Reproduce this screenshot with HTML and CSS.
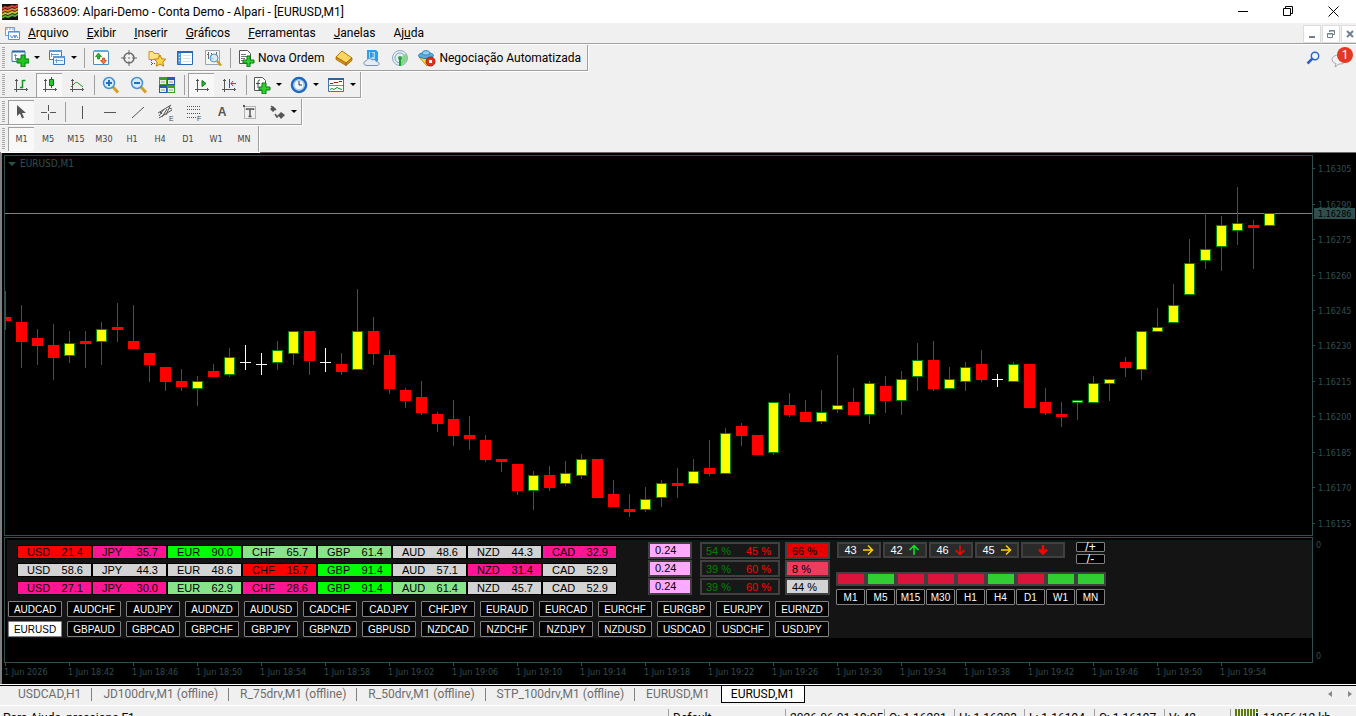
FILE: index.html
```html
<!DOCTYPE html>
<html lang="pt-BR">
<head>
    <meta charset="UTF-8">
    <meta name="viewport" content="width=device-width, initial-scale=1.0">
    <title>16583609: Alpari-Demo - Conta Demo - Alpari - [EURUSD,M1]</title>
    <link rel="stylesheet" href="styles.css">
</head>
<body>
    <header class="titlebar">
        <svg class="logo" width="16" height="16" viewBox="0 0 16 16">
            <rect width="16" height="16" fill="#111"/>
            <g fill="none" stroke-width="2">
                <path d="M0 5l3-2 3 1 4-2 3 1 3-2" stroke="#e8402c"/>
                <path d="M0 8l3-2 3 1 4-2 3 1 3-2" stroke="#f08030"/>
                <path d="M0 11l3-2 3 1 4-2 3 1 3-2" stroke="#c8c43a"/>
                <path d="M0 14l3-2 3 1 4-2 3 1 3-2" stroke="#58b030"/>
            </g>
        </svg>
        <h1>16583609: Alpari-Demo - Conta Demo - Alpari - [EURUSD,M1]</h1>
        <div class="window-buttons">
            <button aria-label="Minimizar"><svg width="11" height="11" viewBox="0 0 11 11"><path d="M0 5.500h10" stroke="#000"/></svg></button>
            <button aria-label="Restaurar"><svg width="11" height="11" viewBox="0 0 11 11"><path d="M.5 2.500h7v7h-7zM2.500 2.500v-2h7v7h-2" fill="none" stroke="#000"/></svg></button>
            <button aria-label="Fechar"><svg width="11" height="11" viewBox="0 0 11 11"><path d="M.5.5l10 10M10.500.5l-10 10" stroke="#000"/></svg></button>
        </div>
    </header>

    <nav class="menubar">
        <svg class="menu-icon" width="15" height="14" viewBox="0 0 15 14">
            <path d="M.5.5h9v8h-9z" fill="#fff" stroke="#6a9fe0"/><path d="M1 2h8" stroke="#6a9fe0" stroke-dasharray="2 1"/>
            <path d="M3.500 4.500h11v8h-11z" fill="#fff" stroke="#5b8fd8"/><path d="M4 5.500h10" stroke="#9cc2ee"/>
            <path d="M5 8l2 3 2-3 1 3 1-3 2 3" fill="none" stroke="#5b8fd8"/>
        </svg>
        <a href="#"><u>A</u>rquivo</a>
        <a href="#"><u>E</u>xibir</a>
        <a href="#"><u>I</u>nserir</a>
        <a href="#"><u>G</u>ráficos</a>
        <a href="#"><u>F</u>erramentas</a>
        <a href="#"><u>J</u>anelas</a>
        <a href="#">Aj<u>u</u>da</a>
        <div class="mdi-buttons">
            <button aria-label="Minimizar gráfico"><svg width="10" height="10" viewBox="0 0 10 10"><path d="M2 8h6" stroke="#708090" stroke-width="2"/></svg></button>
            <button aria-label="Restaurar gráfico"><svg width="10" height="10" viewBox="0 0 10 10"><path d="M1.500 4.500h5v4h-5zM1 5h6M3.500 3V1.500h5v4H7M3 2h6" fill="none" stroke="#708090"/></svg></button>
            <button aria-label="Fechar gráfico"><svg width="10" height="10" viewBox="0 0 10 10"><path d="M2 2l6 6M8 2l-6 6" stroke="#708090" stroke-width="2"/></svg></button>
        </div>
    </nav>

    <main>
        <section class="toolbars">
            <div class="toolbar-row">
                <div class="toolbar">
                    <button class="drop" aria-label="Novo gráfico">
                        <svg width="18" height="18" viewBox="0 0 18 18"><path d="M1 2.500h13v10H1z" fill="#fff" stroke="#3878b8"/><path d="M1 2.500h13" stroke="#2864a8" stroke-width="2"/><path d="M4.500 5v6M3 6.500h3M4 9.500h4" stroke="#7090b0"/><path d="M10 6h4v4h4v4h-4v4h-4v-4H6v-4h4z" fill="#22c522" stroke="#087a10"/></svg>
                        <i class="caret"></i>
                    </button>
                    <button class="drop" aria-label="Perfis">
                        <svg width="18" height="18" viewBox="0 0 18 18"><path d="M1.500 1.500h12v9h-12z" fill="#fff" stroke="#3878b8"/><path d="M1 2h13" stroke="#5a9ad8" stroke-width="2"/><path d="M4 5.500h7M3.500 4v4" stroke="#6a9cc8"/><path d="M5.500 7.500h11v8h-11z" fill="#e8f3fc" stroke="#3878b8"/><path d="M5 8h12" stroke="#5a9ad8" stroke-width="2"/><path d="M7 11.500h8M8.500 10v4" stroke="#6a9cc8"/></svg>
                        <i class="caret"></i>
                    </button>
                    <span class="sep"></span>
                    <button aria-label="Observação do mercado"><svg width="18" height="18" viewBox="0 0 18 18"><path d="M1.500 2.500h15v13h-15z" fill="#fffef0" stroke="#4a8cc8"/><path d="M2 2h14" stroke="#62a8e4" stroke-width="2"/><path d="M6.500 4l3 3.500h-2V10h-2V7.500h-2z" fill="#28b828" stroke="#0a8010" stroke-width=".7"/><path d="M11.500 15l3-3.500h-2V9h-2v2.500h-2z" fill="#f08040" stroke="#c03010" stroke-width=".7"/></svg></button>
                    <button aria-label="Janela de dados"><svg width="18" height="18" viewBox="0 0 18 18"><circle cx="9" cy="9" r="5" fill="none" stroke="#6a6a6a" stroke-width="1.500"/><path d="M9 1v5M9 12v5M1 9h5M12 9h5" stroke="#6a6a6a"/><path d="M8 9h2M9 8v2" stroke="#999"/></svg></button>
                    <button aria-label="Navegador"><svg width="18" height="18" viewBox="0 0 18 18"><path d="M1 2.500h4l1 2h5v6H1z" fill="#ffe480" stroke="#c89820"/><path d="M3.500 11v5M4 14.500h4" stroke="#555" stroke-dasharray="1 1"/><path d="M12 6l1.800 3.800 4 .4-3 2.800.9 4.200-3.700-2.200-3.700 2.200.9-4.200-3-2.800 4-.4z" fill="#ffd54a" stroke="#c08010"/></svg></button>
                    <button aria-label="Terminal"><svg width="18" height="18" viewBox="0 0 18 18"><path d="M1.500 2.500h15v13h-15z" fill="#fff" stroke="#2a68b0"/><path d="M1 3h16" stroke="#2a68b0" stroke-width="2"/><path d="M2 4h3v11H2z" fill="#5a9ad8"/><path d="M3.500 5v9" stroke="#fff" stroke-dasharray="1 2"/><path d="M7 6.500h8M7 9.500h8M7 12.500h8" stroke="#d4e2f0"/></svg></button>
                    <button aria-label="Testador de estratégia"><svg width="18" height="18" viewBox="0 0 18 18"><path d="M1.500 1.500h14v14h-14z" fill="#f7f7ee" stroke="#98a4b0"/><path d="M4.500 3v7M7.500 4v7M12.500 3v4M3 5.500h2M7 9.500h3" stroke="#5c6c7c"/><circle cx="10" cy="9" r="4" fill="#cfe7f8" fill-opacity=".8" stroke="#4a94d0"/><path d="M13 12l4 4.500" stroke="#d89820" stroke-width="2.500"/></svg></button>
                    <span class="sep"></span>
                    <button class="labeled">
                        <svg width="18" height="18" viewBox="0 0 18 18"><path d="M2.500 1.500h8l3 3v10h-11z" fill="#fff" stroke="#555"/><path d="M4 5.500h5M4 7.500h7M4 9.500h4M4 11.500h3" stroke="#777"/><path d="M10 7h3v4h4v3h-4v4h-3v-4H6v-3h4z" fill="#30d030" stroke="#087a10"/></svg>
                        Nova Ordem
                    </button>
                    <button aria-label="MetaEditor"><svg width="18" height="18" viewBox="0 0 18 18"><path d="M7 2l10 7-6 5-10-6z" fill="#ffd660" stroke="#b87808"/><path d="M1 8v2.500l10 6V14zM11 14l6-5v2.500l-6 5z" fill="#d89018" stroke="#9a6008" stroke-width=".7"/></svg></button>
                    <button aria-label="Mercado"><svg width="18" height="18" viewBox="0 0 18 18"><path d="M4 1h9l2 2v9H4z" fill="#28a0f0"/><path d="M6 3h6v7H6z" fill="#a8dcff"/><path d="M7 5h4M7 7h4M8 3v6" stroke="#1878d0"/><path d="M4 16.500c-4 0-4-4-1-4.500 1-3 5-3 6-1 2-1 4 0 4 1.500 4 0 4 4 1 4z" fill="#e6ecf4" stroke="#7890b0"/></svg></button>
                    <button aria-label="Sinais"><svg width="18" height="18" viewBox="0 0 18 18"><circle cx="9" cy="9" r="7.500" fill="#e4eef4" stroke="#90aac0"/><circle cx="9" cy="9" r="5" fill="none" stroke="#82a4c0"/><path d="M9 9v7.500a7.500 7.500 0 006-12z" fill="#7ed080" opacity=".8"/><circle cx="9" cy="9" r="2" fill="#3a9a50"/><path d="M9 9v8" stroke="#20a030" stroke-width="2"/></svg></button>
                    <button class="labeled">
                        <svg width="18" height="18" viewBox="0 0 18 18"><path d="M1 8h14l-6 9z" fill="#ffd840" stroke="#c09018"/><ellipse cx="8" cy="6.500" rx="7.500" ry="3" fill="#58acdc" stroke="#2878b0"/><path d="M4 5a4 3.500 0 018 0c-2 1.500-6 1.500-8 0z" fill="#90d0f0" stroke="#3888b8"/><circle cx="12.500" cy="12.500" r="4.500" fill="#e03020" stroke="#b01810"/><path d="M11 11h3v3h-3z" fill="#fff"/></svg>
                        Negociação Automatizada
                    </button>
                </div>
                <div class="notices">
                    <button aria-label="Procurar"><svg width="14" height="14" viewBox="0 0 14 14"><circle cx="9" cy="5" r="3.700" fill="#eef6ff" stroke="#2c68d0" stroke-width="1.500"/><path d="M6.500 7.500L1.500 12.500" stroke="#2c60c8" stroke-width="2.500"/></svg></button>
                    <button class="chat" aria-label="Mensagens">
                        <svg width="16" height="14" viewBox="0 0 16 14"><path d="M8 1c4 0 7 1.500 7 4.500S12 10 9 10H8l-4 3 1-3.500C3 9 1 8 1 5.500S4 1 8 1z" fill="#f2f2f6" stroke="#aaa"/></svg>
                        <span class="badge">1</span>
                    </button>
                </div>
            </div>

            <div class="toolbar-row">
                <div class="toolbar">
                    <button aria-label="Gráfico de barras"><svg width="18" height="18" viewBox="0 0 18 18"><path d="M4.500 3v13M2 13.500h14M3 4.500h3M14.500 12v3" stroke="#555"/><path d="M10.500 4v8M10.500 4.500h3M8 11.500h3" stroke="#109820" stroke-width="1.500"/></svg></button>
                    <button class="pressed" aria-label="Velas"><svg width="18" height="18" viewBox="0 0 18 18"><path d="M4.500 3v13M2 13.500h14M3 4.500h3M14.500 12v3" stroke="#555"/><path d="M10.500 1v11" stroke="#087a10"/><path d="M8.500 3.500h4v6h-4z" fill="#28c830" stroke="#087a10"/></svg></button>
                    <button aria-label="Gráfico de linha"><svg width="18" height="18" viewBox="0 0 18 18"><path d="M4.500 3v13M2 13.500h14M3 4.500h3M14.500 12v3" stroke="#555"/><path d="M3 11l4-4c1-1 2-1 3 0l5 4" fill="none" stroke="#109820"/></svg></button>
                    <span class="sep"></span>
                    <button aria-label="Ampliar"><svg width="18" height="18" viewBox="0 0 18 18"><path d="M11 11l5 5.500" stroke="#d8a020" stroke-width="3"/><circle cx="7" cy="7" r="5.500" fill="#d4ecfc" stroke="#4890d0" stroke-width="1.500"/><path d="M4 7h6M7 4v6" stroke="#2070c0" stroke-width="2"/></svg></button>
                    <button aria-label="Reduzir"><svg width="18" height="18" viewBox="0 0 18 18"><path d="M11 11l5 5.500" stroke="#d8a020" stroke-width="3"/><circle cx="7" cy="7" r="5.500" fill="#d4ecfc" stroke="#4890d0" stroke-width="1.500"/><path d="M4 7h6" stroke="#2070c0" stroke-width="2"/></svg></button>
                    <button aria-label="Lado a lado"><svg width="18" height="18" viewBox="0 0 18 18"><path d="M1 1h8v8H1zM9 9h8v8H9z" fill="#3ca020"/><path d="M9 1h8v8H9zM1 9h8v8H1z" fill="#2858b8"/><path d="M2 4h6v4H2zM10 4h6v4h-6zM2 12h6v4H2zM10 12h6v4h-6z" fill="#e8f0e0"/><path d="M3 6h4M11 6h4M3 14h4M11 14h4" stroke="#8aa"/></svg></button>
                    <span class="sep"></span>
                    <button class="pressed" aria-label="Rolagem automática"><svg width="18" height="18" viewBox="0 0 18 18"><path d="M4.500 3v13M2 13.500h14M3 4.500h3M14.500 12v3" stroke="#555"/><path d="M9 4.500v6L13 7.500z" fill="#28b830" stroke="#087a10"/></svg></button>
                    <button aria-label="Deslocamento do gráfico"><svg width="18" height="18" viewBox="0 0 18 18"><path d="M4.500 3v13M2 13.500h14M3 4.500h3M14.500 12v3" stroke="#555"/><path d="M9.500 3v9" stroke="#2060a0"/><path d="M11 7.500h5M13 5l-2 2.500L13 10" fill="none" stroke="#c03818"/></svg></button>
                    <span class="sep"></span>
                    <button class="drop" aria-label="Indicadores">
                        <svg width="18" height="18" viewBox="0 0 18 18"><path d="M1.500 1.500h8l3 3v10h-11z" fill="#fff" stroke="#555"/><path d="M7 4c-2 0-2 1-2 3v5M3 7.500h4" fill="none" stroke="#444"/><path d="M9 7h4v4h4v3h-4v4H9v-4H6v-3h3z" fill="#30d030" stroke="#087a10"/></svg>
                        <i class="caret"></i>
                    </button>
                    <button class="drop" aria-label="Períodos">
                        <svg width="18" height="18" viewBox="0 0 18 18"><circle cx="9" cy="9" r="7" fill="#eef6ff" stroke="#1c68c0" stroke-width="2.500"/><circle cx="9" cy="9" r="5" fill="none" stroke="#90b8e0"/><path d="M9 5v4h3" fill="none" stroke="#333"/></svg>
                        <i class="caret"></i>
                    </button>
                    <button class="drop" aria-label="Modelos">
                        <svg width="18" height="18" viewBox="0 0 18 18"><path d="M1.500 2.500h15v13h-15z" fill="#fff" stroke="#3878b8"/><path d="M1 3h16" stroke="#2864a8" stroke-width="2"/><path d="M2 9.500h14" stroke="#5a92c8"/><path d="M3 7.500h3l1-1h4l1-1h3" fill="none" stroke="#902010"/><path d="M3 13.500l2-1 2 1 3-2 2 1 3 1" fill="none" stroke="#108830"/></svg>
                        <i class="caret"></i>
                    </button>
                </div>
            </div>

            <div class="toolbar-row">
                <div class="toolbar">
                    <button class="pressed" aria-label="Cursor"><svg width="18" height="18" viewBox="0 0 18 18"><path d="M4 2v11l3-2.500 2 5 2-1-2-4.500h4z" fill="#555"/></svg></button>
                    <button aria-label="Cruz"><svg width="18" height="18" viewBox="0 0 18 18"><path d="M9.500 2v6M9.500 11v6M2 9.500h6M11 9.500h6" stroke="#555"/></svg></button>
                    <span class="sep"></span>
                    <button aria-label="Linha vertical"><svg width="18" height="18" viewBox="0 0 18 18"><path d="M9.500 3v13" stroke="#555"/></svg></button>
                    <button aria-label="Linha horizontal"><svg width="18" height="18" viewBox="0 0 18 18"><path d="M3 9.500h12" stroke="#555"/></svg></button>
                    <button aria-label="Linha de tendência"><svg width="18" height="18" viewBox="0 0 18 18"><path d="M3 15L15 4" stroke="#555"/></svg></button>
                    <button aria-label="Canal equidistante"><svg width="18" height="18" viewBox="0 0 18 18"><path d="M1 10L14 2M2 15L15 7M2 13l5-7M5 14l5-8M9 12l4-9M3 9l2 2M12 5l3 1" stroke="#555"/><text x="12" y="18" font-size="7">E</text></svg></button>
                    <button aria-label="Fibonacci"><svg width="18" height="18" viewBox="0 0 18 18"><path d="M2 3.500h14M2 6.500h14M2 10.500h14M2 14.500h9" stroke="#555" stroke-dasharray="1 1"/><text x="12" y="18" font-size="7">F</text></svg></button>
                    <button aria-label="Texto" class="letter">A</button>
                    <button aria-label="Etiqueta de texto"><svg width="18" height="18" viewBox="0 0 18 18"><path d="M3.500 3.500h11v12h-11z" fill="none" stroke="#777" stroke-dasharray="1 1"/><path d="M5.500 7V6h7v1M9 6v8M7.500 13.500h3" fill="none" stroke="#555" stroke-width="1.500"/><path d="M2 2h2v2H2z" fill="#555"/></svg></button>
                    <button class="drop" aria-label="Setas">
                        <svg width="18" height="18" viewBox="0 0 18 18"><path d="M5 3l3 3-3 3-3-3zM13 9l4 3-4 4-3-4z" fill="#555"/><path d="M3 3l5 4M7 11l2 3 2-2" fill="none" stroke="#555" stroke-width="1.500"/></svg>
                        <i class="caret"></i>
                    </button>
                </div>
            </div>

            <div class="toolbar-row">
                <div class="toolbar periods">
                    <button class="pressed">M1</button>
                    <button>M5</button>
                    <button>M15</button>
                    <button>M30</button>
                    <button>H1</button>
                    <button>H4</button>
                    <button>D1</button>
                    <button>W1</button>
                    <button>MN</button>
                </div>
            </div>
        </section>

        <section class="chart-window">
            <div class="pane price-pane">
                <button class="symbol"><i></i>EURUSD,M1</button>
                <svg id="candles"></svg>
            </div>
            <svg id="price-axis" class="axis"></svg>

            <div class="pane indicator-pane">
                <div class="panel">
                    <div class="panel-left">
                        <div class="meters">
                            <table class="strength" id="strength"></table>
                            <div class="stack lots"><span>0.24</span><span>0.24</span><span>0.24</span></div>
                            <div class="stack ratios">
                                <span><b class="buy">54 %</b><b class="sell">45 %</b></span>
                                <span><b class="buy">39 %</b><b class="sell">60 %</b></span>
                                <span><b class="buy">39 %</b><b class="sell">60 %</b></span>
                            </div>
                            <div class="stack totals"><span class="hot">66 %</span><span class="warm">8 %</span><span class="flat">44 %</span></div>
                        </div>
                        <div class="pairs" id="pairs"></div>
                    </div>
                    <div class="panel-right">
                        <div class="signals">
                            <span>43 <svg width="12" height="12" viewBox="0 0 12 12"><path d="M1 6h9M6 1.500L10.500 6 6 10.500" stroke="#ffd000"/></svg></span>
                            <span>42 <svg width="12" height="12" viewBox="0 0 12 12"><path d="M6 11V2M1.500 6L6 1.500 10.500 6" stroke="#00f020"/></svg></span>
                            <span>46 <svg width="12" height="12" viewBox="0 0 12 12"><path d="M6 1v9M1.500 6L6 10.500 10.500 6" stroke="#ff0000"/></svg></span>
                            <span>45 <svg width="12" height="12" viewBox="0 0 12 12"><path d="M1 6h9M6 1.500L10.500 6 6 10.500" stroke="#ffd000"/></svg></span>
                            <span><svg width="12" height="12" viewBox="0 0 12 12"><path d="M6 1v8M2 5.500L6 9.500 10 5.500" stroke="#ff0000" stroke-width="2.500"/></svg></span>
                            <div class="zoomers"><button>/+</button><button>/-</button></div>
                        </div>
                        <div class="trend">
                            <i class="down"></i><i class="up"></i><i class="down"></i><i class="down"></i><i class="down"></i><i class="up"></i><i class="down"></i><i class="up"></i><i class="up"></i>
                        </div>
                        <div class="frames">
                            <button>M1</button><button>M5</button><button>M15</button><button>M30</button><button>H1</button><button>H4</button><button>D1</button><button>W1</button><button>MN</button>
                        </div>
                    </div>
                </div>
            </div>
            <div class="axis zero-axis"><span>0</span><span>0</span></div>
            <div class="time-axis" id="time-axis"></div>
        </section>
    </main>

    <nav class="tabs">
        <a href="#">USDCAD,H1</a>
        <a href="#">JD100drv,M1 (offline)</a>
        <a href="#">R_75drv,M1 (offline)</a>
        <a href="#">R_50drv,M1 (offline)</a>
        <a href="#">STP_100drv,M1 (offline)</a>
        <a href="#">EURUSD,M1</a>
        <a href="#" class="active">EURUSD,M1</a>
        <div class="scrollers">
            <button aria-label="Anterior"><svg width="5" height="8" viewBox="0 0 5 8"><path d="M4 1v6L0 4z" fill="#888"/></svg></button>
            <button aria-label="Próximo"><svg width="5" height="8" viewBox="0 0 5 8"><path d="M1 1v6l4-3z" fill="#888"/></svg></button>
        </div>
    </nav>

    <footer class="status">
        <span class="help">Para Ajuda, pressione F1</span>
        <span class="profile">Default</span>
        <span class="date">2026.06.01 19:05</span>
        <span class="ohlc">O: 1.16201</span>
        <span class="ohlc">H: 1.16203</span>
        <span class="ohlc">L: 1.16194</span>
        <span class="ohlc">C: 1.16197</span>
        <span class="volume">V: 42</span>
        <span class="traffic"><svg width="24" height="12" viewBox="0 0 24 12"><path d="M1 0v12M4 0v12M7 0v12M10 0v12M13 0v12M16 0v10M19 0v8M22 0v3" stroke="#5c7a10" stroke-width="2"/><path d="M19 8v4M22 4v8" stroke="#102860" stroke-width="2"/></svg>11056/12 kb</span>
    </footer>

    <script src="script.js"></script>
</body>
</html>
```
FILE: styles.css
```css
* {
    box-sizing: border-box;
}

body {
    display: flex;
    flex-direction: column;
    height: 100vh;
    margin: 0;
    overflow: hidden;
    background: #f0f0f0;
    color: #000;
    font-family: Roboto, "Open Sans", sans-serif;
    font-size: 12px;
}

button {
    margin: 0;
    padding: 0;
    border: 0;
    background: none;
    color: inherit;
    font: inherit;
}

a {
    color: inherit;
    text-decoration: none;
}

svg {
    flex: none;
    display: block;
}

/* Title and menu */
.titlebar {
    display: flex;
    flex: none;
    align-items: center;
    height: 23px;
    padding-left: 2px;
    background: #fff;
}

.titlebar h1 {
    margin: 0 0 0 5px;
    font-size: 12px;
    font-weight: normal;
    white-space: nowrap;
}

.window-buttons {
    display: flex;
    margin-left: auto;
}

.window-buttons button {
    display: flex;
    align-items: center;
    justify-content: center;
    width: 45px;
    height: 20px;
}

.menubar {
    display: flex;
    flex: none;
    align-items: center;
    height: 22px;
    border-bottom: 1px solid #fff;
    box-shadow: inset 0 -1px #a0a0a0;
    padding-left: 5px;
}

.menubar a {
    padding: 0 9px 1px;
    line-height: 18px;
}

.menu-icon + a {
    padding-left: 8px;
}

.mdi-buttons {
    display: flex;
    gap: 1px;
    margin-left: auto;
    margin-right: -3px;
}

.mdi-buttons button {
    display: flex;
    align-items: center;
    justify-content: center;
    width: 18px;
    height: 18px;
    border: 1px solid #ddd;
    background: #fff;
}

main {
    flex: none;
}

/* Toolbars */
.toolbar-row {
    display: flex;
    justify-content: space-between;
    margin-bottom: 1px;
}

.toolbar-row:last-child {
    margin-bottom: 0;
}

.toolbar {
    display: flex;
    align-items: center;
    height: 26px;
    padding-left: 7px;
    border-right: 1px solid #a0a0a0;
    border-bottom: 1px solid #a0a0a0;
    box-shadow: 1px 1px #fff;
    background: repeating-linear-gradient(#a8a8a8 0 1px, #f0f0f0 1px 2px) 2px 2px / 3px 21px no-repeat;
}

.toolbar-row:last-child .toolbar {
    border-bottom-color: #f0f0f0;
}

.toolbar button {
    display: flex;
    align-items: center;
    justify-content: center;
    width: 28px;
    height: 24px;
}

.toolbar .drop {
    width: 37px;
    gap: 5px;
}

.toolbar .labeled {
    width: auto;
    gap: 3px;
    padding: 0 6px 0 4px;
    white-space: nowrap;
}

.toolbar .pressed {
    width: 26px;
    margin: 0 1px;
    border-top: 1px solid #a0a0a0;
    border-left: 1px solid #a0a0a0;
    background: #f8f8f8;
}

.toolbar .pressed:first-child {
    margin-right: 0;
}

.toolbar text {
    fill: #444;
    font-family: "Liberation Sans", sans-serif;
}

.toolbar .letter {
    color: #555;
    font: bold 12px "Liberation Sans", sans-serif;
}

.periods button {
    color: #444;
    font: 9px "DejaVu Sans Condensed", "DejaVu Sans", sans-serif;
}

.caret {
    border: 3px solid transparent;
    border-top-color: #000;
    border-bottom: 0;
}

.sep {
    width: 1px;
    height: 20px;
    margin: 0 2px 0 3px;
    background: #a0a0a0;
}

.notices {
    display: flex;
    align-items: center;
    gap: 11px;
    padding-right: 9px;
}

.chat {
    position: relative;
    padding-top: 6px;
}

.badge {
    position: absolute;
    top: -1px;
    left: 6px;
    width: 16px;
    height: 16px;
    border-radius: 50%;
    background: #e23a22;
    color: #fff;
    font-size: 12px;
    line-height: 16px;
}

/* Chart */
.chart-window {
    display: grid;
    grid-template-columns: minmax(0, 1fr) 43px;
    grid-template-rows: 381px 126px 20px;
    row-gap: 1px;
    padding: 2px 0 0 2px;
    border-top: 1px solid #696969;
    border-left: 2px solid #808080;
    background: #000;
    color: #2f4f4f;
    font: 9px "DejaVu Sans Condensed", "DejaVu Sans", sans-serif;
}

.pane {
    position: relative;
    border: 1px solid #2f4f4f;
    overflow: hidden;
}

#candles {
    width: 100%;
    height: 100%;
    shape-rendering: crispEdges;
}

.axis {
    width: 100%;
    height: 100%;
}

.symbol {
    position: absolute;
    top: 2px;
    left: 3px;
    display: flex;
    align-items: center;
    gap: 4px;
    font-size: 10px;
}

.symbol i {
    border: 4px solid transparent;
    border-top-color: #2f4f4f;
    border-bottom: 0;
}

.zero-axis {
    display: flex;
    flex-direction: column;
    justify-content: space-between;
    padding: 3px 3px 2px;
}

.time-axis {
    display: flex;
    grid-column: 1 / -1;
    margin-top: -1px;
}

.time-axis span {
    flex: none;
    width: 64px;
    padding-top: 4px;
    white-space: nowrap;
    background: linear-gradient(#2f4f4f, #2f4f4f) 1px 0 / 1px 3px no-repeat;
}

/* Currency panel */
.panel {
    display: flex;
    gap: 6px;
    height: 98px;
    margin: 2px 0 0 2px;
    padding: 2px 0 0 1px;
    background: #141414;
    color: #000;
    font: 11px "Liberation Sans", sans-serif;
}

.meters {
    display: flex;
    height: 59px;
}

.strength {
    flex: none;
    height: 50px;
    margin: -1px 31px 0 9px;
    border-spacing: 0 4px;
}

.strength td {
    width: 75px;
    height: 14px;
    padding: 0 8px 0 9px;
    border: 1px solid #000;
    line-height: 12px;
}

.strength td div {
    display: flex;
    justify-content: space-between;
}

.silver { background: #d3d3d3; }
.pink { background: #ff1493; }
.red { background: #ff0000; }
.lime { background: #00ff00; }
.green { background: #88e488; }

.stack {
    display: flex;
    flex-direction: column;
    gap: 1px;
}

.stack span {
    height: 17px;
    border: 2px solid #404040;
    padding-left: 5px;
    line-height: 13px;
}

.lots {
    width: 44px;
    margin-right: 8px;
}

.lots span {
    background: #ffaaff;
}

.ratios {
    width: 80px;
    margin-right: 5px;
}

.ratios span {
    display: flex;
    justify-content: space-between;
    padding: 1px 7px 0 4px;
    background: #181818;
}

.ratios b {
    font-weight: normal;
}

.buy { color: #008000; }
.sell { color: #ff0000; }

.totals {
    width: 45px;
}

.totals span {
    padding-top: 1px;
}

.hot { background: #e60000; }
.warm { background: #f03c5c; }
.flat { background: #d3d3d3; }

.pairs {
    display: grid;
    grid-template-columns: repeat(14, 54px);
    gap: 4px 5px;
}

.pairs button,
.frames button,
.zoomers button {
    height: 16px;
    border: 1px solid #808080;
    border-radius: 1px;
    background: #000;
    color: #fff;
    font-size: 10px;
    line-height: 14px;
}

.pairs button,
.frames button {
    padding-top: 1px;
    line-height: 13px;
}

.pairs .current {
    background: #fff;
    color: #000;
}

.signals {
    display: flex;
    gap: 2px;
    height: 30px;
    padding-left: 1px;
}

.signals span {
    display: flex;
    align-items: center;
    justify-content: center;
    gap: 5px;
    width: 44px;
    height: 16px;
    border: 2px solid #404040;
    background: #2a2a2a;
    color: #fff;
}

.signals svg {
    stroke-width: 1.5;
}

.signals path {
    fill: none;
}

.zoomers {
    display: flex;
    flex-direction: column;
    gap: 2px;
    margin-left: 9px;
}

.zoomers button {
    width: 29px;
    height: 10px;
    font-size: 12px;
    line-height: 8px;
}

.trend {
    display: grid;
    grid-template-columns: repeat(9, 26px);
    gap: 4px;
    width: 270px;
    height: 14px;
    padding: 2px;
    background: #404040;
}

.down { background: #dc143c; }
.up { background: #32cd32; }

.frames {
    display: grid;
    grid-template-columns: repeat(9, 29px);
    gap: 1px;
    margin-top: 3px;
}

/* Tabs and status */
.tabs {
    display: flex;
    flex: none;
    height: 22px;
    padding: 0 0 2px 7px;
    border-top: 1px solid #fff;
    border-bottom: 1px solid #fff;
    box-shadow: inset 0 1px #000;
    color: #6d6d6d;
}

.tabs a {
    display: flex;
    align-items: center;
    padding: 0 11px;
    background: linear-gradient(#808080, #808080) right center / 1px 13px no-repeat;
}

.tabs a:nth-child(6) {
    background: none;
}

.tabs .active {
    padding: 0 9px;
    border: 1px solid #000;
    background: #fff;
    color: #000;
}

.scrollers {
    display: flex;
    align-items: center;
    gap: 14px;
    margin-left: auto;
    padding-right: 4px;
}

.status {
    display: flex;
    flex: none;
    height: 22px;
    padding-top: 1px;
    line-height: 18px;
}

.status span {
    flex: none;
    padding-left: 4px;
    margin-top: 2px;
    border-left: 1px solid #a0a0a0;
    white-space: nowrap;
}

.status .help {
    flex: 1;
    padding-left: 3px;
    border: 0;
}

.profile { width: 117px; }
.date { width: 99px; }
.ohlc { width: 70px; }
.volume { width: 66px; }

.status .traffic {
    display: flex;
    gap: 4px;
    width: 126px;
}
```
FILE: script.js
```js
// [high, low, body top, body bottom, type] per minute, y in pixels of the price scale
const candles = [
    [291, 330, 317, 321, 'd'], [305, 368, 322, 342, 'd'], [329, 365, 338, 346, 'd'], [324, 380, 345, 358, 'd'],
    [331, 363, 343, 356, 'u'], [331, 368, 341, 344, 'd'], [322, 365, 329, 342, 'u'], [303, 342, 327, 330, 'd'],
    [305, 349, 341, 349, 'd'], [353, 382, 353, 365, 'd'], [367, 391, 367, 382, 'd'], [369, 391, 381, 387, 'd'],
    [376, 406, 381, 389, 'u'], [364, 377, 371, 377, 'd'], [348, 377, 357, 375, 'u'], [345, 370, 362, 363, 'x'],
    [353, 375, 364, 365, 'x'], [341, 370, 350, 363, 'u'], [331, 365, 331, 354, 'u'], [331, 375, 331, 361, 'd'],
    [348, 372, 362, 363, 'x'], [353, 375, 364, 372, 'd'], [289, 370, 331, 370, 'u'], [317, 365, 331, 354, 'd'],
    [350, 394, 355, 389, 'd'], [388, 408, 390, 401, 'd'], [381, 415, 397, 413, 'd'], [412, 432, 414, 424, 'd'],
    [400, 446, 419, 436, 'd'], [416, 450, 435, 439, 'd'], [435, 462, 440, 460, 'd'], [459, 472, 459, 462, 'd'],
    [464, 495, 464, 491, 'd'], [471, 510, 475, 491, 'u'], [466, 491, 475, 488, 'd'], [461, 486, 473, 484, 'u'],
    [454, 479, 459, 476, 'u'], [459, 498, 459, 498, 'd'], [480, 507, 494, 507, 'd'], [494, 517, 509, 512, 'd'],
    [487, 512, 499, 510, 'u'], [480, 507, 483, 498, 'u'], [468, 498, 483, 486, 'd'], [459, 484, 471, 484, 'u'],
    [440, 476, 468, 474, 'd'], [428, 474, 433, 474, 'u'], [423, 446, 426, 436, 'd'], [435, 455, 435, 455, 'd'],
    [402, 455, 402, 453, 'u'], [393, 417, 405, 415, 'd'], [400, 422, 412, 422, 'd'], [390, 424, 412, 422, 'u'],
    [355, 413, 405, 410, 'u'], [388, 415, 402, 415, 'd'], [381, 424, 383, 415, 'u'], [376, 413, 386, 401, 'd'],
    [371, 415, 379, 401, 'u'], [343, 391, 360, 377, 'u'], [341, 391, 360, 389, 'd'], [367, 389, 379, 389, 'u'],
    [362, 391, 367, 382, 'u'], [350, 382, 364, 380, 'd'], [374, 387, 379, 380, 'x'], [362, 382, 364, 382, 'u'],
    [364, 408, 364, 408, 'd'], [388, 415, 402, 413, 'd'], [402, 427, 414, 417, 'd'], [400, 420, 400, 403, 'u'],
    [376, 403, 383, 403, 'u'], [379, 401, 379, 384, 'u'], [357, 377, 362, 368, 'd'], [331, 380, 331, 370, 'u'],
    [308, 332, 327, 332, 'u'], [284, 323, 305, 323, 'u'], [239, 295, 263, 295, 'u'], [213, 269, 249, 261, 'u'],
    [216, 271, 225, 247, 'u'], [187, 245, 223, 231, 'u'], [220, 269, 225, 228, 'd'], [213, 226, 213, 226, 'u']
];
const paneTop = 156;
const colors = { d: '#ff0000', u: '#008000', x: '#ffffff' };

function rect(x, y, w, h, fill) {
    return `<rect x="${x}" y="${y}" width="${w}" height="${h}" fill="${fill}"/>`;
}

function drawCandles() {
    let out = rect(0, 213 - paneTop, '100%', 1, '#808080');
    candles.forEach(([high, low, top, bottom, type], i) => {
        const x = i * 16;
        out += rect(x, high - paneTop, 1, low - high, colors[type]);
        out += rect(x - 5, top - paneTop, 11, bottom - top, colors[type]);
        if (type === 'u') {
            out += rect(x - 4, top - paneTop + 1, 9, bottom - top - 2, '#ffff00');
        }
    });
    document.getElementById('candles').innerHTML = out;
}

function drawPrices() {
    const rows = [168, 204, 239, 275, 310, 345, 381, 416, 452, 487, 523];
    let out = '';
    rows.forEach((y, i) => {
        const price = (1.16305 - i * 0.00015).toFixed(5);
        out += rect(0, y - 155, 2, 1, '#2f4f4f');
        out += `<text x="5" y="${y - 151}" fill="#2f4f4f">${price}</text>`;
    });
    out += rect(1, 53, 41, 11, '#2f4f4f') + '<text x="5" y="62" fill="#000">1.16286</text>';
    document.getElementById('price-axis').innerHTML = out;
}

function drawTimes() {
    let out = '<span>1 Jun 2026</span>';
    for (let m = 42; m <= 114; m += 4) {
        out += `<span>1 Jun ${18 + Math.floor(m / 60)}:${String(m % 60).padStart(2, '0')}</span>`;
    }
    document.getElementById('time-axis').innerHTML = out;
}

const currencies = ['USD', 'JPY', 'EUR', 'CHF', 'GBP', 'AUD', 'NZD', 'CAD'];
const strength = [
    [['21.4', 'red'], ['35.7', 'pink'], ['90.0', 'lime'], ['65.7', 'green'], ['61.4', 'green'], ['48.6', 'silver'], ['44.3', 'silver'], ['32.9', 'pink']],
    [['58.6', 'silver'], ['44.3', 'silver'], ['48.6', 'silver'], ['15.7', 'red'], ['91.4', 'lime'], ['57.1', 'silver'], ['31.4', 'pink'], ['52.9', 'silver']],
    [['27.1', 'pink'], ['30.0', 'pink'], ['62.9', 'green'], ['28.6', 'pink'], ['91.4', 'lime'], ['61.4', 'green'], ['45.7', 'silver'], ['52.9', 'silver']]
];
const pairs = [
    'AUDCAD', 'AUDCHF', 'AUDJPY', 'AUDNZD', 'AUDUSD', 'CADCHF', 'CADJPY', 'CHFJPY', 'EURAUD', 'EURCAD', 'EURCHF', 'EURGBP', 'EURJPY', 'EURNZD',
    'EURUSD', 'GBPAUD', 'GBPCAD', 'GBPCHF', 'GBPJPY', 'GBPNZD', 'GBPUSD', 'NZDCAD', 'NZDCHF', 'NZDJPY', 'NZDUSD', 'USDCAD', 'USDCHF', 'USDJPY'
];

function drawPanel() {
    document.getElementById('strength').innerHTML = strength.map(row =>
        '<tr>' + row.map(([value, color], i) =>
            `<td class="${color}"><div><span>${currencies[i]}</span><span>${value}</span></div></td>`
        ).join('') + '</tr>'
    ).join('');
    document.getElementById('pairs').innerHTML = pairs.map(pair =>
        `<button${pair === 'EURUSD' ? ' class="current"' : ''}>${pair}</button>`
    ).join('');
}

drawCandles();
drawPrices();
drawTimes();
drawPanel();
```
